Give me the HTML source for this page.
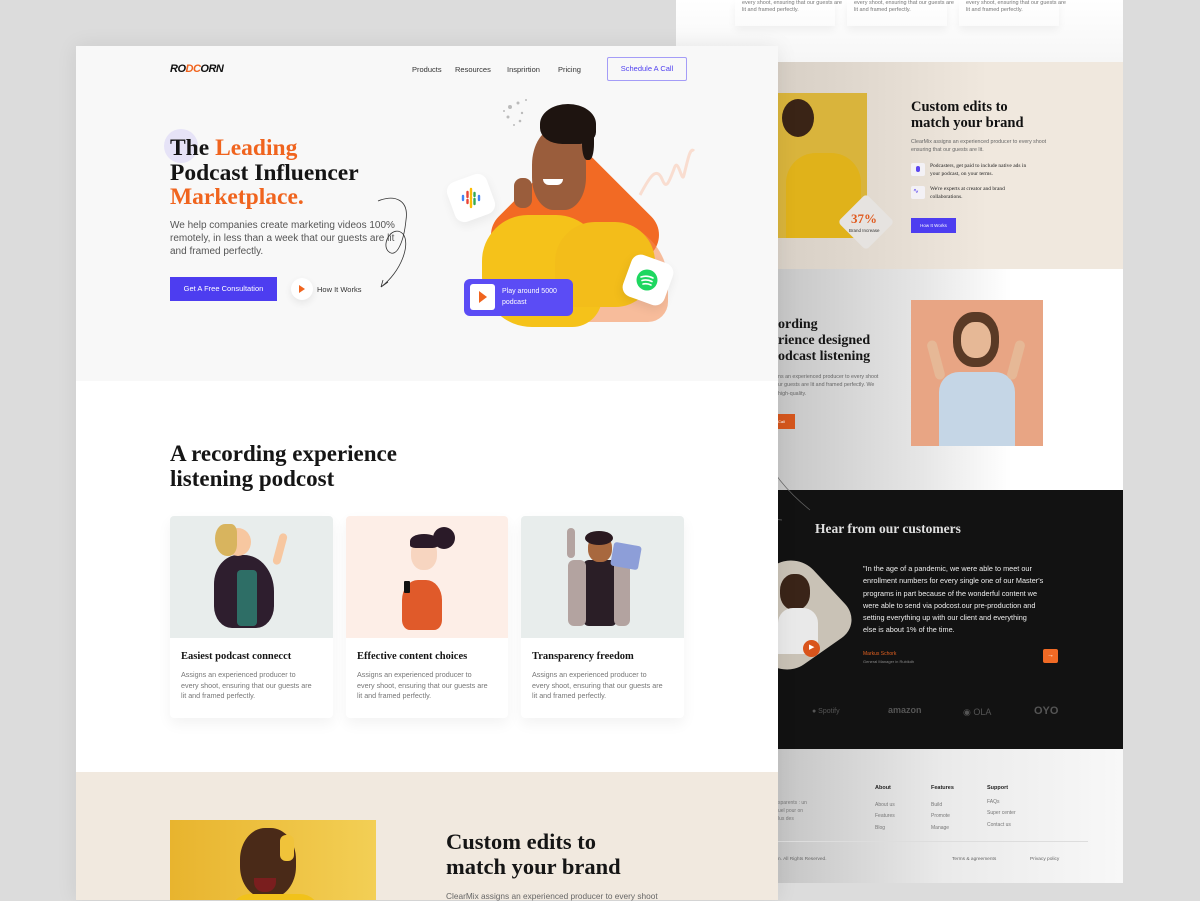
<!DOCTYPE html>
<html><head><meta charset="utf-8"><style>
*{margin:0;padding:0;box-sizing:border-box}
body{width:1200px;height:900px;overflow:hidden;background:#dcdcdc;position:relative;font-family:"Liberation Sans",sans-serif}
.a{position:absolute}
.serif{font-family:"Liberation Serif",serif;font-weight:bold}
.t{white-space:nowrap}
</style></head><body>

<!-- BACK PAGE -->
<div class="a" style="left:676px;top:0;width:447px;height:883px;background:#fff"></div>
<div class="a" style="left:676px;top:0;width:447px;height:62px;background:linear-gradient(180deg,#fff,#f6f6f6)"></div>
<div class="a t" style="left:742px;top:0;font-size:5.5px;color:#777;line-height:7px">every shoot, ensuring that our guests are<br>lit and framed perfectly.</div>
<div class="a t" style="left:854px;top:0;font-size:5.5px;color:#777;line-height:7px">every shoot, ensuring that our guests are<br>lit and framed perfectly.</div>
<div class="a t" style="left:966px;top:0;font-size:5.5px;color:#777;line-height:7px">every shoot, ensuring that our guests are<br>lit and framed perfectly.</div>
<div class="a" style="left:735px;top:0;width:100px;height:26px;box-shadow:0 4px 8px rgba(0,0,0,.05)"></div>
<div class="a" style="left:847px;top:0;width:100px;height:26px;box-shadow:0 4px 8px rgba(0,0,0,.05)"></div>
<div class="a" style="left:959px;top:0;width:100px;height:26px;box-shadow:0 4px 8px rgba(0,0,0,.05)"></div>

<!-- tan section -->
<div class="a" style="left:676px;top:62px;width:447px;height:207px;background:linear-gradient(90deg,#cfc7bd 0%,#ddd5cb 35%,#f0e8de 70%,#f0e8de 100%)"></div>
<div class="a" style="left:778px;top:93px;width:89px;height:145px;background:#d9b43c;overflow:hidden">
  <div class="a" style="left:8px;top:60px;width:75px;height:90px;background:#e0b21a;border-radius:30px 30px 0 0"></div>
  <div class="a" style="left:4px;top:6px;width:32px;height:38px;background:#3a2416;border-radius:50%"></div>
</div>
<div class="a" style="left:846px;top:202px;width:40px;height:40px;background:#e6e3e0;transform:rotate(45deg);border-radius:4px"></div>
<div class="a serif t" style="left:851px;top:211px;font-size:13px;color:#e05a1e">37%</div>
<div class="a t" style="left:849px;top:228px;font-size:4.5px;color:#333">Brand Increase</div>
<div class="a serif t" style="left:911px;top:99px;font-size:14.5px;line-height:16px;color:#111">Custom edits to<br>match your brand</div>
<div class="a t" style="left:911px;top:138px;font-size:5.3px;line-height:8.3px;color:#666">ClearMix assigns an experienced producer to every shoot<br>ensuring that our guests are lit.</div>
<div class="a" style="left:911px;top:163px;width:14px;height:13px;background:#f3f1f5;border-radius:2px"></div>
<div class="a" style="left:916px;top:166px;width:4px;height:6px;background:#5b45f0;border-radius:2px"></div>
<div class="a t serif" style="left:930px;top:163px;font-size:5.5px;line-height:7.5px;color:#222;font-weight:normal">Podcasters, get paid to include native ads in<br>your podcast, on your terms.</div>
<div class="a" style="left:911px;top:186px;width:14px;height:13px;background:#f3f1f5;border-radius:2px"></div>
<div class="a t" style="left:913px;top:187px;font-size:7px;color:#5b45f0">∿</div>
<div class="a t serif" style="left:930px;top:186px;font-size:5.5px;line-height:7.5px;color:#222;font-weight:normal">We're experts at creator and brand<br>collaborations.</div>
<div class="a t" style="left:911px;top:218px;width:45px;height:15px;background:#4d3df0;color:#fff;font-size:4.5px;text-align:center;line-height:15px">How It Works</div>

<!-- recording section -->
<div class="a" style="left:676px;top:269px;width:447px;height:221px;background:linear-gradient(90deg,#bdbdbd 0%,#c8c8c8 25%,#e6e6e6 55%,#fff 75%)"></div>
<div class="a serif t" style="left:778px;top:317px;font-size:14px;line-height:16px;color:#151515">ording<br>rience designed<br>odcast listening</div>
<div class="a t" style="left:778px;top:373px;font-size:5.3px;line-height:8.3px;color:#666">ns an experienced producer to every shoot<br>ur guests are lit and framed perfectly. We<br>high-quality.</div>
<div class="a t" style="left:778px;top:414px;width:17px;height:15px;background:#d4561d;color:#fff;font-size:4px;line-height:15px">Call</div>
<div class="a" style="left:911px;top:300px;width:132px;height:146px;background:#e8a584;overflow:hidden">
  <div class="a" style="left:28px;top:72px;width:76px;height:80px;background:#c5d6e6;border-radius:20px 20px 0 0"></div>
  <div class="a" style="left:42px;top:12px;width:46px;height:55px;background:#5a3a26;border-radius:45%"></div>
  <div class="a" style="left:50px;top:22px;width:30px;height:36px;background:#e6b896;border-radius:45%"></div>
  <div class="a" style="left:20px;top:40px;width:10px;height:40px;background:#e6b896;border-radius:5px;transform:rotate(-15deg)"></div>
  <div class="a" style="left:100px;top:40px;width:10px;height:40px;background:#e6b896;border-radius:5px;transform:rotate(15deg)"></div>
</div>

<!-- dark testimonial -->
<div class="a" style="left:676px;top:490px;width:447px;height:259px;background:#121212"></div>
<div class="a serif t" style="left:815px;top:521px;font-size:13.5px;color:#e0e0e0">Hear from our customers</div>
<div class="a" style="left:740px;top:566px;width:98px;height:98px;background:#c9c2b6;border-radius:26px;transform:rotate(-35deg) skewX(8deg);overflow:hidden"></div>
<div class="a" style="left:780px;top:574px;width:30px;height:36px;background:#3a2418;border-radius:45%"></div>
<div class="a" style="left:778px;top:608px;width:40px;height:46px;background:#e9e9e9;border-radius:15px 15px 0 0"></div>
<div class="a" style="left:803px;top:640px;width:17px;height:17px;background:#d9541c;border-radius:50%"></div>
<div class="a t" style="left:809px;top:643px;font-size:7px;color:#fff">▶</div>
<div class="a t" style="left:863px;top:563px;font-size:7.3px;line-height:12.3px;color:#eee">"In the age of a pandemic, we were able to meet our<br>enrollment numbers for every single one of our Master's<br>programs  in part because of the wonderful content we<br>were able to send via podcost.our pre-production and<br>setting everything up with our client and everything<br>else is about 1% of the time.</div>
<div class="a t" style="left:863px;top:651px;font-size:5px;color:#e06020">Markus Schork</div>
<div class="a t" style="left:863px;top:659px;font-size:4px;color:#888">General Manager in Rubikdh</div>
<div class="a" style="left:1043px;top:649px;width:15px;height:14px;background:#f06a25;border-radius:2px;color:#fff;font-size:7px;text-align:center;line-height:14px">→</div>
<div class="a t" style="left:812px;top:708px;font-size:7px;color:#555">● Spotify</div>
<div class="a t" style="left:888px;top:705px;font-size:9px;color:#555;font-weight:bold">amazon</div>
<div class="a t" style="left:963px;top:707px;font-size:9px;color:#555">◉ OLA</div>
<div class="a t" style="left:1034px;top:705px;font-size:11px;color:#555;font-weight:bold">OYO</div>

<!-- footer -->
<div class="a" style="left:676px;top:749px;width:447px;height:134px;background:linear-gradient(90deg,#bcbcbc 0%,#c7c7c7 25%,#eaeaea 60%,#f8f8f8 100%)"></div>
<div class="a t" style="left:875px;top:785px;font-size:5.5px;color:#222;font-weight:bold">About</div>
<div class="a t" style="left:931px;top:785px;font-size:5.5px;color:#222;font-weight:bold">Features</div>
<div class="a t" style="left:987px;top:785px;font-size:5.5px;color:#222;font-weight:bold">Support</div>
<div class="a t" style="left:875px;top:800px;font-size:5px;line-height:11.3px;color:#777">About us<br>Features<br>Blog</div>
<div class="a t" style="left:931px;top:800px;font-size:5px;line-height:11.3px;color:#777">Build<br>Promote<br>Manage</div>
<div class="a t" style="left:987px;top:797px;font-size:5px;line-height:11.3px;color:#777">FAQs<br>Super center<br>Contact us</div>
<div class="a t" style="left:778px;top:800px;font-size:5px;line-height:7.8px;color:#777">sparents : un<br>uel pour  on<br>lus des</div>
<div class="a" style="left:778px;top:841px;width:310px;height:1px;background:#ddd"></div>
<div class="a t" style="left:778px;top:857px;font-size:4.8px;color:#666">n. All Rights Reserved.</div>
<div class="a t" style="left:952px;top:857px;font-size:4.8px;color:#666">Terms &amp; agreements</div>
<div class="a t" style="left:1030px;top:857px;font-size:4.8px;color:#666">Privacy policy</div>

<!-- decorative curve crossing -->
<svg class="a" style="left:720px;top:370px" width="110" height="160"><path d="M32 10 C30 60 40 100 90 140 M58 36 C20 40 0 70 20 110 C30 140 50 150 62 150" fill="none" stroke="#666" stroke-width=".7"/></svg>

<!-- FRONT PAGE -->
<div class="a" style="left:76px;top:46px;width:702px;height:854px;background:#fff;box-shadow:0 0 20px rgba(0,0,0,.08)"></div>
<div class="a" style="left:76px;top:46px;width:702px;height:335px;background:#f8f8f8"></div>
<div class="a t" style="left:170px;top:63px;font-size:11px;font-weight:bold;font-style:italic;letter-spacing:-.5px;color:#111">RO<span style="color:#f0641e">DC</span>ORN</div>
<div class="a t" style="left:412px;top:65px;font-size:7.5px;color:#333">Products</div>
<div class="a t" style="left:455px;top:65px;font-size:7.5px;color:#333">Resources</div>
<div class="a t" style="left:507px;top:65px;font-size:7.5px;color:#333">Insprirtion</div>
<div class="a t" style="left:558px;top:65px;font-size:7.5px;color:#333">Pricing</div>
<div class="a t" style="left:607px;top:57px;width:80px;height:24px;border:1px solid #a49cf7;border-radius:2px;color:#4f3ff0;font-size:7.5px;text-align:center;line-height:22px">Schedule A Call</div>

<div class="a" style="left:164px;top:129px;width:34px;height:34px;border-radius:50%;background:#e6e3f7"></div>
<div class="a serif t" style="left:170px;top:136px;font-size:23.5px;line-height:24.5px;color:#151515">The <span style="color:#f0641e">Leading</span><br>Podcast Influencer<br><span style="color:#f0641e">Marketplace.</span></div>
<div class="a t" style="left:170px;top:219px;font-size:10px;line-height:13.2px;color:#555">We help companies create marketing videos 100%<br>remotely, in less than a week that our guests are lit<br>and framed perfectly.</div>
<div class="a t" style="left:170px;top:277px;width:107px;height:24px;background:#4d3df0;color:#fff;font-size:7.5px;text-align:center;line-height:24px">Get A Free Consultation</div>
<div class="a" style="left:291px;top:278px;width:22px;height:22px;border-radius:50%;background:#fff;box-shadow:0 3px 8px rgba(0,0,0,.08)"></div>
<div class="a" style="left:299px;top:285px;width:0;height:0;border-left:6px solid #f0641e;border-top:4px solid transparent;border-bottom:4px solid transparent"></div>
<div class="a t" style="left:317px;top:285px;font-size:7.5px;color:#333">How It Works</div>
<svg class="a" style="left:375px;top:190px" width="50" height="105"><path d="M3 11 C20 4 34 10 31 30 C29 50 22 70 13 61 C6 53 18 34 28 44 C36 54 26 82 6 97 M6 97 l7 -5 M6 97 l2 -7" fill="none" stroke="#333" stroke-width=".8"/></svg>

<!-- hero graphic -->
<svg class="a" style="left:500px;top:95px" width="50" height="40"><g fill="#bbb"><circle cx="10" cy="12" r="2"/><circle cx="18" cy="8" r="1.5"/><circle cx="8" cy="22" r="1.5"/><circle cx="22" cy="18" r="1.2"/><circle cx="14" cy="30" r="1"/><circle cx="26" cy="5" r="1"/><circle cx="20" cy="26" r="1.3"/><circle cx="4" cy="16" r="1"/></g></svg>
<svg class="a" style="left:638px;top:145px" width="60" height="55"><path d="M2 50 C10 35 18 20 24 34 C28 44 30 40 36 24 C40 10 44 40 46 30 C50 14 52 2 56 6" fill="none" stroke="#f9ddd0" stroke-width="3"/></svg>
<div class="a" style="left:508px;top:168px;width:134px;height:134px;background:#f26a24;border-radius:26px;transform:rotate(45deg)"></div>
<div class="a" style="left:540px;top:222px;width:128px;height:100px;background:#f68b4f;border-radius:60px 60px 20px 20px;opacity:.55"></div>
<div class="a" style="left:482px;top:215px;width:120px;height:112px;background:#f5c21a;border-radius:46px 46px 30px 50px"></div>
<div class="a" style="left:555px;top:222px;width:100px;height:85px;background:#f3bd1a;border-radius:40px 40px 40px 10px"></div>
<div class="a" style="left:532px;top:128px;width:54px;height:82px;background:#9a5d3c;border-radius:45% 45% 40% 40%"></div>
<div class="a" style="left:540px;top:104px;width:56px;height:40px;background:#1e1410;border-radius:50% 50% 30% 40%"></div>
<div class="a" style="left:582px;top:120px;width:12px;height:40px;background:#1e1410;border-radius:40%"></div>
<div class="a" style="left:543px;top:179px;width:20px;height:6px;background:#fff;border-radius:0 0 6px 6px"></div>
<div class="a" style="left:514px;top:178px;width:18px;height:30px;background:#9a5d3c;border-radius:8px"></div>
<div class="a" style="left:450px;top:177px;width:42px;height:42px;background:#fff;border-radius:10px;transform:rotate(-20deg);box-shadow:0 4px 10px rgba(0,0,0,.06)"></div>
<svg class="a" style="left:460px;top:187px" width="22" height="22"><g stroke-linecap="round" stroke-width="2.4"><line x1="3" y1="9" x2="3" y2="13" stroke="#4285f4"/><line x1="7.5" y1="5" x2="7.5" y2="10" stroke="#ea4335"/><line x1="7.5" y1="13" x2="7.5" y2="16" stroke="#ea4335"/><line x1="11" y1="2" x2="11" y2="8" stroke="#fbbc04"/><line x1="11" y1="10" x2="11" y2="12" stroke="#fbbc04"/><line x1="11" y1="14" x2="11" y2="20" stroke="#fbbc04"/><line x1="14.5" y1="6" x2="14.5" y2="9" stroke="#34a853"/><line x1="14.5" y1="12" x2="14.5" y2="17" stroke="#34a853"/><line x1="19" y1="9" x2="19" y2="13" stroke="#4285f4"/></g></svg>
<div class="a" style="left:626px;top:258px;width:44px;height:44px;background:#fff;border-radius:10px;transform:rotate(20deg);box-shadow:0 4px 10px rgba(0,0,0,.08)"></div>
<svg class="a" style="left:636px;top:269px" width="22" height="22"><circle cx="11" cy="11" r="10.5" fill="#1ed760"/><path d="M5 8 Q11 6 17 9 M6 11.5 Q11 10 16 12.5 M7 15 Q11 14 15 16" stroke="#fff" stroke-width="1.6" fill="none" stroke-linecap="round"/></svg>
<div class="a" style="left:464px;top:279px;width:109px;height:37px;background:#5b4cf5;border-radius:6px"></div>
<div class="a" style="left:470px;top:284px;width:25px;height:26px;background:#fff;border-radius:3px"></div>
<div class="a" style="left:479px;top:291px;width:0;height:0;border-left:8px solid #f0641e;border-top:6px solid transparent;border-bottom:6px solid transparent"></div>
<div class="a t" style="left:502px;top:287px;font-size:7px;line-height:10.5px;color:#fff">Play around 5000<br>podcast</div>

<!-- section 2 -->
<div class="a serif t" style="left:170px;top:442px;font-size:23px;line-height:24.5px;color:#151515">A recording experience<br>listening podcost</div>

<div class="a" style="left:170px;top:516px;width:163px;height:202px;background:#fff;border-radius:4px;box-shadow:0 6px 14px rgba(0,0,0,.05)"></div>
<div class="a" style="left:170px;top:516px;width:163px;height:122px;background:#e8edec;border-radius:4px 4px 0 0"></div>
<div class="a" style="left:346px;top:516px;width:162px;height:202px;background:#fff;border-radius:4px;box-shadow:0 6px 14px rgba(0,0,0,.05)"></div>
<div class="a" style="left:346px;top:516px;width:162px;height:122px;background:#fdeee7;border-radius:4px 4px 0 0"></div>
<div class="a" style="left:521px;top:516px;width:163px;height:202px;background:#fff;border-radius:4px;box-shadow:0 6px 14px rgba(0,0,0,.05)"></div>
<div class="a" style="left:521px;top:516px;width:163px;height:122px;background:#e8edec;border-radius:4px 4px 0 0"></div>

<!-- illustrations -->
<div class="a" style="left:214px;top:555px;width:60px;height:73px;background:#2e1e2e;border-radius:40% 50% 30% 30%"></div>
<div class="a" style="left:237px;top:570px;width:20px;height:56px;background:#2e6e66;border-radius:4px"></div>
<div class="a" style="left:225px;top:528px;width:26px;height:28px;background:#f7c7a0;border-radius:50%"></div>
<div class="a" style="left:215px;top:524px;width:22px;height:32px;background:#d8b45e;border-radius:50% 30% 40% 60%"></div>
<div class="a" style="left:276px;top:533px;width:8px;height:32px;background:#f7c7a0;border-radius:4px;transform:rotate(15deg)"></div>

<div class="a" style="left:402px;top:580px;width:40px;height:50px;background:#e05a2a;border-radius:40% 40% 20% 20%"></div>
<div class="a" style="left:411px;top:538px;width:26px;height:32px;background:#f7d5c0;border-radius:45%"></div>
<div class="a" style="left:410px;top:534px;width:28px;height:14px;background:#2a1a28;border-radius:50% 50% 20% 20%"></div>
<div class="a" style="left:433px;top:527px;width:22px;height:22px;background:#2a1a28;border-radius:50%"></div>
<div class="a" style="left:404px;top:581px;width:6px;height:12px;background:#111;border-radius:1px"></div>

<div class="a" style="left:583px;top:560px;width:34px;height:66px;background:#2a1e26;border-radius:6px"></div>
<div class="a" style="left:568px;top:560px;width:18px;height:66px;background:#b3a3a0;border-radius:6px"></div>
<div class="a" style="left:614px;top:560px;width:16px;height:66px;background:#b3a3a0;border-radius:6px"></div>
<div class="a" style="left:588px;top:535px;width:24px;height:27px;background:#a8683e;border-radius:45%"></div>
<div class="a" style="left:585px;top:531px;width:28px;height:14px;background:#2a1a20;border-radius:50%"></div>
<div class="a" style="left:612px;top:544px;width:28px;height:24px;background:#8d9ed8;border-radius:3px;transform:rotate(10deg)"></div>
<div class="a" style="left:567px;top:528px;width:8px;height:30px;background:#b3a3a0;border-radius:4px"></div>

<div class="a serif t" style="left:181px;top:651px;font-size:10.5px;color:#151515">Easiest podcast connecct</div>
<div class="a serif t" style="left:357px;top:651px;font-size:10.5px;color:#151515">Effective content choices</div>
<div class="a serif t" style="left:532px;top:651px;font-size:10.5px;color:#151515">Transparency freedom</div>
<div class="a t" style="left:181px;top:670px;font-size:7.2px;line-height:10.5px;color:#777">Assigns an experienced producer to<br>every shoot, ensuring that our guests are<br>lit and framed perfectly.</div>
<div class="a t" style="left:357px;top:670px;font-size:7.2px;line-height:10.5px;color:#777">Assigns an experienced producer to<br>every shoot, ensuring that our guests are<br>lit and framed perfectly.</div>
<div class="a t" style="left:532px;top:670px;font-size:7.2px;line-height:10.5px;color:#777">Assigns an experienced producer to<br>every shoot, ensuring that our guests are<br>lit and framed perfectly.</div>

<!-- bottom tan -->
<div class="a" style="left:76px;top:772px;width:702px;height:128px;background:#f1e9df"></div>
<div class="a" style="left:170px;top:820px;width:206px;height:80px;background:linear-gradient(90deg,#e8b42e,#f3cf55);overflow:hidden">
  <div class="a" style="left:70px;top:8px;width:56px;height:70px;background:#4a2a18;border-radius:45%"></div>
  <div class="a" style="left:84px;top:58px;width:22px;height:14px;background:#7a1e1e;border-radius:0 0 10px 10px"></div>
  <div class="a" style="left:110px;top:15px;width:14px;height:26px;background:#f0c33a;border-radius:6px"></div>
  <div class="a" style="left:60px;top:74px;width:90px;height:20px;background:#f1c21a;border-radius:20px 20px 0 0"></div>
</div>
<div class="a serif t" style="left:446px;top:830px;font-size:22.5px;line-height:24.5px;color:#151515">Custom edits to<br>match your brand</div>
<div class="a t" style="left:446px;top:891px;font-size:8.3px;color:#666">ClearMix assigns an experienced producer to every shoot</div>

</body></html>
